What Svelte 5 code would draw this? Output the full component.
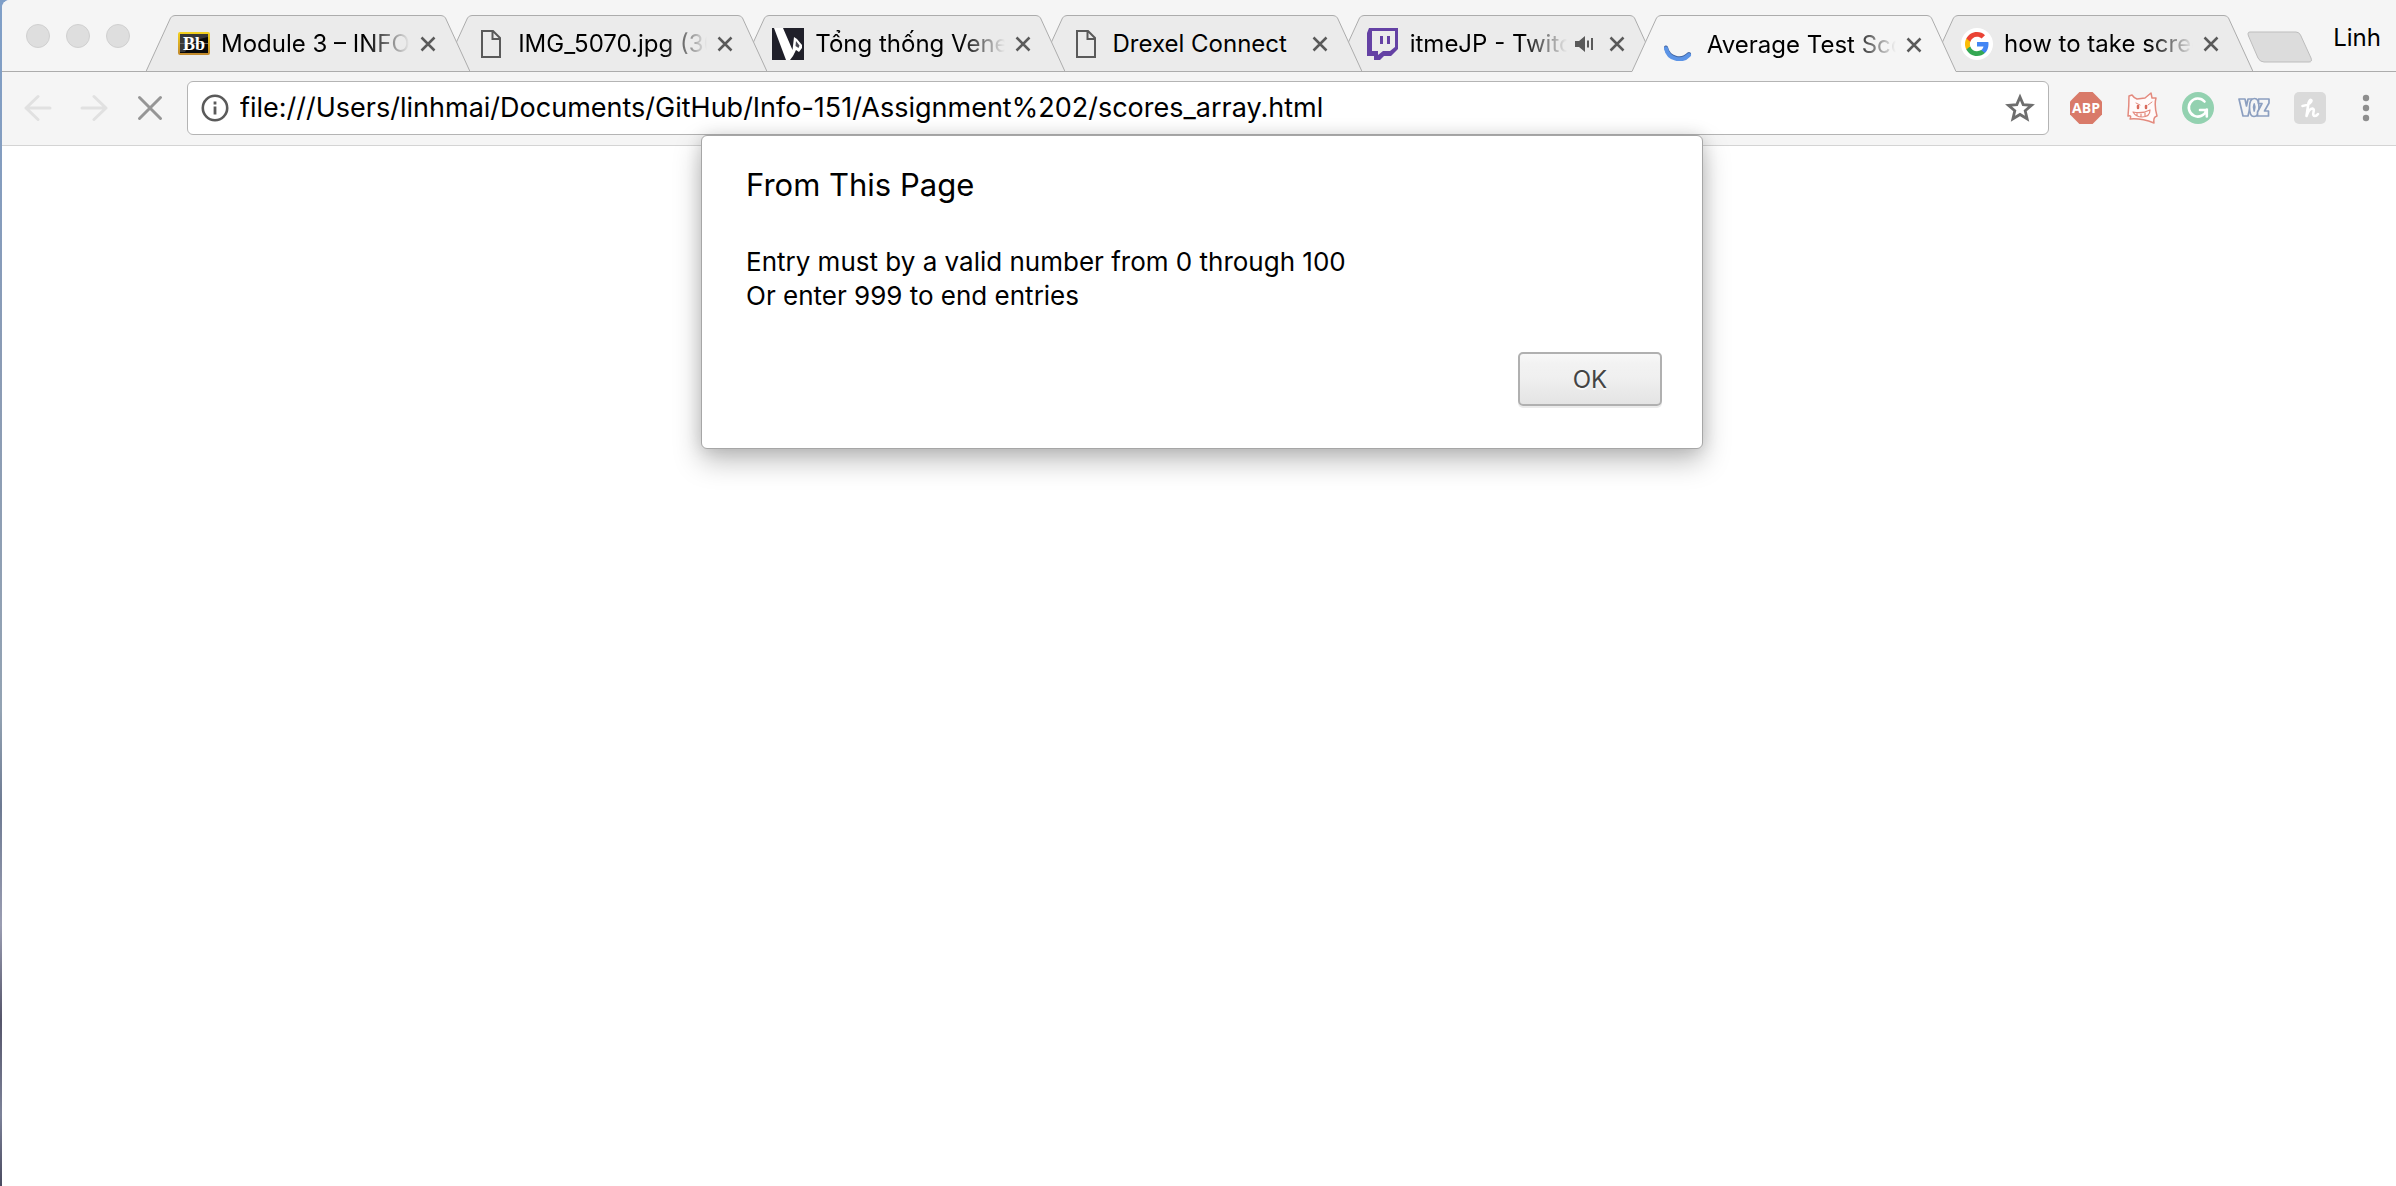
<script>
  const tabs = [
    { title: 'Module 3 – INFO', icon: 'bb', fade: true },
    { title: 'IMG_5070.jpg (30', icon: 'page', fade: true },
    { title: 'Tổng thống Vene', icon: 'news', fade: true },
    { title: 'Drexel Connect', icon: 'page' },
    { title: 'itmeJP - Twitc', icon: 'twitch', fade: true, audio: true },
    { title: 'Average Test Sco', icon: 'spinner', fade: true, active: true },
    { title: 'how to take scree', icon: 'google', fade: true }
  ];
  let url = $state('file:///Users/linhmai/Documents/GitHub/Info-151/Assignment%202/scores_array.html');
</script>

<div class="desktop">
  <div class="window">
    <header class="strip">
      <div class="lights">
        <button class="light" aria-label="Close window"></button>
        <button class="light" aria-label="Minimize window"></button>
        <button class="light" aria-label="Zoom window"></button>
      </div>

      <div class="tabs" role="tablist">
        {#each tabs as tab, i}
          <div class="tab" class:active={tab.active} style:z-index={tab.active ? 20 : 10 - i}>
            <svg class="edge" viewBox="0 0 30 57" preserveAspectRatio="xMidYMin slice" aria-hidden="true">
              <path class="fill" d="M0 57V56L24.500 3Q26 .5 29 .5H30V57Z" />
              <path class="line" d="M0 56.500L24.500 3Q26 .5 29 .5H30" />
            </svg>
            <div class="body" role="tab" aria-selected={!!tab.active} tabindex="0">
              <span class="fav" class:narrow={tab.icon === 'page'}>
                {#if tab.icon === 'bb'}
                  <svg width="32" height="24" viewBox="0 0 32 24" aria-hidden="true">
                    <defs>
                      <linearGradient id="gold" x1="0" y1="0" x2="0" y2="1">
                        <stop offset="0" stop-color="#f2cf1e" /><stop offset="1" stop-color="#c28a2c" />
                      </linearGradient>
                    </defs>
                    <rect x="1" y="1" width="30" height="21" rx="1" fill="#0a0a0a" stroke="url(#gold)" stroke-width="2" />
                    <path d="M2 2H30V5Q14 7 7 20H2Z" fill="#555" opacity=".6" />
                    <path d="M2 11.500H30" stroke="#666" />
                    <text x="16" y="18" text-anchor="middle" font-family="Liberation Serif, serif" font-weight="700" font-size="18" fill="#fff">Bb</text>
                  </svg>
                {:else if tab.icon === 'page'}
                  <svg width="20" height="28" viewBox="0 0 20 28" aria-hidden="true">
                    <path d="M1 1H12L19 8V27H1ZM11.500 1V9H19" fill="none" stroke="#5a5a5a" stroke-width="2" />
                  </svg>
                {:else if tab.icon === 'news'}
                  <svg width="32" height="32" viewBox="0 0 32 32" aria-hidden="true">
                    <rect width="32" height="32" fill="#20202a" />
                    <path d="M2 0H11L20.500 22L22 9L25 11L30 17V20L27 24L24 22L21 28L18 32H14Z" fill="#fff" />
                    <path d="M24 13L27.500 17.500L26.500 20L23.500 18Z" fill="#4a4a54" />
                  </svg>
                {:else if tab.icon === 'twitch'}
                  <svg width="32" height="32" viewBox="0 0 32 32" aria-hidden="true">
                    <path d="M2 0H31V21L24 28H17L13 32H7V28H0V5Z" fill="#6441a4" />
                    <path d="M5 3H28V19L23 23H16L11 27V23H5Z" fill="#ebebeb" />
                    <path d="M13 8H16V16H13ZM20 8H23V16H20Z" fill="#6441a4" />
                  </svg>
                {:else if tab.icon === 'spinner'}
                  <svg width="32" height="32" viewBox="0 0 32 32" aria-hidden="true">
                    <path d="M2 18.500A13.500 13.500 0 0 0 25 25" fill="none" stroke="#3f63a0" stroke-width="4" stroke-linecap="round" />
                    <path d="M2 19.500A13.500 13.500 0 0 0 25 26" fill="none" stroke="#5c94e6" stroke-width="4" stroke-linecap="round" />
                  </svg>
                {:else}
                  <svg width="32" height="32" viewBox="0 0 32 32" aria-hidden="true">
                    <circle cx="16" cy="16" r="16" fill="#fff" />
                    <g transform="translate(4 4)">
                      <path d="M23.500 12.300c0-.8-.1-1.600-.2-2.300H12v4.500h6.500c-.3 1.500-1.100 2.800-2.400 3.600v3h3.900c2.200-2.100 3.500-5.200 3.500-8.800z" fill="#4285f4" />
                      <path d="M12 24c3.200 0 6-1.100 7.900-2.900l-3.900-3c-1.100.7-2.400 1.200-4 1.200-3.100 0-5.800-2.100-6.700-4.900h-4v3.100C3.300 21.300 7.300 24 12 24z" fill="#34a853" />
                      <path d="M5.300 14.300c-.3-.7-.4-1.500-.4-2.300s.1-1.600.4-2.300V6.600h-4C.5 8.200 0 10.100 0 12s.5 3.800 1.300 5.400z" fill="#fbbc05" />
                      <path d="M12 4.800c1.800 0 3.300.6 4.600 1.800l3.400-3.400C18 1.200 15.200 0 12 0 7.300 0 3.300 2.700 1.300 6.600l4 3.100C6.200 6.900 8.900 4.800 12 4.800z" fill="#ea4335" />
                    </g>
                  </svg>
                {/if}
              </span>
              <span class="title" class:fade={tab.fade}>{tab.title}</span>
              {#if tab.audio}
                <button class="audio" aria-label="Mute tab">
                  <svg width="20" height="18" viewBox="0 0 20 18" aria-hidden="true">
                    <path d="M0 6H4L10 1V17L4 12H0Z" fill="#5a5a5a" />
                    <path d="M13 5.500V12.500M17 3V15" stroke="#5a5a5a" stroke-width="2" />
                  </svg>
                </button>
              {/if}
              <button class="close" aria-label="Close tab">
                <svg width="16" height="16" viewBox="0 0 16 16" aria-hidden="true">
                  <path d="M1.500 1.500L14.500 14.500M14.500 1.500L1.500 14.500" stroke="#5a5a5a" stroke-width="2.500" />
                </svg>
              </button>
            </div>
            <svg class="edge" viewBox="0 0 30 57" preserveAspectRatio="xMidYMin slice" aria-hidden="true">
              <path class="fill" d="M30 57V56L5.500 3Q4 .5 1 .5H0V57Z" />
              <path class="line" d="M30 56.500L5.500 3Q4 .5 1 .5H0" />
            </svg>
          </div>
        {/each}
      </div>

      <button class="new-tab" aria-label="New tab">
        <svg width="66" height="32" viewBox="0 0 66 32" aria-hidden="true">
          <path d="M3 1H49Q52 1 53.500 4L64 27Q65.500 31 62 31H17Q13 31 11 27L1.500 5Q0 1 3 1Z" fill="#dcdcdc" stroke="#bdbdbd" />
        </svg>
      </button>
      <button class="profile">Linh</button>
    </header>

    <nav class="toolbar">
      <div class="nav">
        <button aria-label="Back">
          <svg width="28" height="28" viewBox="0 0 28 28" aria-hidden="true">
            <path d="M26 14H2M14 2.500L2 14L14 25.500" fill="none" stroke="#e1e1e1" stroke-width="3" stroke-linecap="round" stroke-linejoin="round" />
          </svg>
        </button>
        <button aria-label="Forward">
          <svg width="28" height="28" viewBox="0 0 28 28" aria-hidden="true">
            <path d="M2 14H26M14 2.500L26 14L14 25.500" fill="none" stroke="#e1e1e1" stroke-width="3" stroke-linecap="round" stroke-linejoin="round" />
          </svg>
        </button>
        <button aria-label="Stop loading">
          <svg width="28" height="28" viewBox="0 0 28 28" aria-hidden="true">
            <path d="M3.500 3.500L24.500 24.500M24.500 3.500L3.500 24.500" stroke="#969696" stroke-width="3" stroke-linecap="round" />
          </svg>
        </button>
      </div>

      <div class="omnibox">
        <button aria-label="Page information">
          <svg width="28" height="28" viewBox="0 0 28 28" aria-hidden="true">
            <circle cx="14" cy="14" r="12.200" fill="none" stroke="#5a5a5a" stroke-width="2.600" />
            <path d="M12.600 7.500H15.400V10.500H12.600ZM12.600 12.500H15.400V20.500H12.600Z" fill="#5a5a5a" />
          </svg>
        </button>
        <input type="text" aria-label="Address" spellcheck="false" bind:value={url} />
        <button aria-label="Bookmark this page">
          <svg width="30" height="30" viewBox="0 0 30 30" aria-hidden="true">
            <path d="M15 4L18.200 11.600L26.500 12.300L20.200 17.700L22.100 25.800L15 21.500L7.900 25.800L9.800 17.700L3.500 12.300L11.800 11.600Z" fill="none" stroke="#6e6e6e" stroke-width="2.800" />
          </svg>
        </button>
      </div>

      <div class="extensions">
        <button aria-label="Adblock Plus">
          <svg width="32" height="32" viewBox="0 0 32 32" aria-hidden="true">
            <path d="M9.400 0H22.600L32 9.400V22.600L22.600 32H9.400L0 22.600V9.400Z" fill="#d97a69" />
            <text x="16" y="21" text-anchor="middle" font-family="Open Sans, sans-serif" font-weight="700" font-size="14" fill="#fff">ABP</text>
          </svg>
        </button>
        <button aria-label="Smiling cat">
          <svg width="32" height="32" viewBox="0 0 32 32" aria-hidden="true" fill="none" stroke="#e38a7e" stroke-linejoin="round" stroke-linecap="round">
            <path d="M3 4L6 3Q8 6 11 7L19 6L25 1L26 6L30 6Q28 13 31 24Q27 25 28 31Q15 26 4 27Q6 23 2 24Q3 14 3 4Z" fill="#fffafa" stroke-width="1.500" />
            <path d="M10 11L14 13M22 13L26 10" stroke-width="1" />
            <path d="M12 14V16M20 14V16" stroke="#d9695b" stroke-width="2.500" />
            <path d="M7 20Q16 22 24 18Q24 25 16 25Q10 25 7 20ZM11 21V24M15 22V25M19 21V24" stroke-width="1.200" />
          </svg>
        </button>
        <button aria-label="Grammarly">
          <svg width="32" height="32" viewBox="0 0 32 32" aria-hidden="true">
            <circle cx="16" cy="16" r="16" fill="#93d1b0" />
            <path d="M22.500 9.500A9 9 0 1 0 24.500 18H18M24.800 17.500V24.500" fill="none" stroke="#fff" stroke-width="2.600" stroke-linecap="round" />
          </svg>
        </button>
        <button aria-label="Voz">
          <svg width="32" height="32" viewBox="0 0 32 32" aria-hidden="true" fill="#f5f5f5" stroke="#8c9fc0" stroke-width="1.700" stroke-linejoin="round">
            <path d="M1 7H7L8.500 14L10 7H14L10 24H5Z" />
            <path d="M16.500 6.500Q21 6.500 21 15.500Q21 24.500 16 24.500Q11.500 24.500 11.500 15.500Q11.500 6.500 16.500 6.500ZM16.200 12Q14.800 15 16.200 19Q17.600 15 16.200 12Z" />
            <path d="M20.500 7H31V11L26.500 19H30.500V24H19.500V20L24 11.500H20.500Z" />
          </svg>
        </button>
        <button aria-label="Honey">
          <svg width="32" height="32" viewBox="0 0 32 32" aria-hidden="true">
            <rect width="32" height="32" rx="5" fill="#dadada" />
            <path d="M8.500 14Q18 12 17.500 8.500Q16 6.500 14.500 11L12.500 24Q15 16.500 18.500 16.500Q20.500 17 19.500 20Q18.500 24 21 24Q22.500 24 24 22" fill="none" stroke="#fff" stroke-width="2.600" stroke-linecap="round" stroke-linejoin="round" />
          </svg>
        </button>
        <button class="menu" aria-label="Browser menu">
          <svg width="8" height="28" viewBox="0 0 8 28" aria-hidden="true" fill="#8e8e8e">
            <circle cx="4" cy="4" r="3.200" /><circle cx="4" cy="14" r="3.200" /><circle cx="4" cy="24" r="3.200" />
          </svg>
        </button>
      </div>
    </nav>

    <main class="page"></main>
  </div>

  <div class="overlay">
    <div class="dialog" role="alertdialog" aria-labelledby="dialog-title" aria-describedby="dialog-text">
      <h1 id="dialog-title">From This Page</h1>
      <p id="dialog-text">Entry must by a valid number from 0 through 100<br />Or enter 999 to end entries</p>
      <div class="actions"><button class="ok">OK</button></div>
    </div>
  </div>
</div>

<style>
  :global(body) { background: #fff; }
  .desktop {
    position: relative;
    box-sizing: border-box;
    min-height: 100vh;
    padding-left: 2px;
    display: flex;
    background: linear-gradient(#7f9fc8, #8a9bb5 30%, #93a3b3 60%, #6d7a92 68%, #9a9db2 78%, #55556a 86%, #7c8299 94%, #4a4a60);
    font-family: Inter, "Liberation Sans", sans-serif;
    color: #000;
  }
  button {
    display: flex;
    align-items: center;
    justify-content: center;
    padding: 0;
    border: 0;
    background: none;
    font: inherit;
    color: inherit;
    flex: none;
  }
  svg { display: block; flex: none; }
  .window {
    flex: 1;
    min-width: 0;
    display: flex;
    flex-direction: column;
    background: #fff;
    border-top-left-radius: 8px;
    overflow: hidden;
  }
  .strip {
    display: flex;
    align-items: flex-end;
    height: 71px;
    padding: 0 15px 0 24px;
    background: #f5f5f5;
    border-bottom: 1px solid #acacac;
  }
  .lights { display: flex; gap: 16px; margin: 0 16px 23px 0; }
  .light {
    box-sizing: border-box;
    width: 24px;
    height: 24px;
    border: 1px solid #d0d0d0;
    border-radius: 50%;
    background: #dedede;
  }
  .tabs { flex: 1; min-width: 0; display: flex; }
  .tab {
    position: relative;
    flex: 1 1 0;
    min-width: 0;
    display: flex;
    height: 56px;
  }
  .tab + .tab { margin-left: -27px; }
  .tab.active { height: 57px; margin-bottom: -1px; }
  .edge { width: 30px; height: 100%; overflow: hidden; }
  .fill { fill: #ebebeb; }
  .active .fill { fill: #f5f5f5; }
  .line { fill: none; stroke: #acacac; }
  .body {
    flex: 1;
    min-width: 0;
    display: flex;
    align-items: center;
    box-sizing: border-box;
    border-top: 1px solid #acacac;
    background: #ebebeb;
    padding: 1px 4px 0 2px;
  }
  .active .body { background: #f5f5f5; }
  .fav { display: flex; width: 32px; margin-right: 11px; flex: none; }
  .fav.narrow { justify-content: center; }
  .title {
    flex: 1;
    min-width: 0;
    overflow: hidden;
    white-space: nowrap;
    font-size: 24px;
    line-height: 32px;
  }
  .title.fade { mask-image: linear-gradient(to left, transparent, #000 44px); }
  .audio { margin-left: 8px; }
  .close { margin-left: 10px; }
  .audio + .close { margin-left: 14px; }
  .new-tab { margin: 0 20px 8px -6px; }
  .profile { margin-bottom: 17px; font-size: 24px; line-height: 32px; }
  .toolbar {
    display: flex;
    align-items: center;
    box-sizing: border-box;
    height: 74px;
    padding: 0 26px 2px 22px;
    background: #f5f5f5;
    border-bottom: 1px solid #d4d4d4;
  }
  .nav { display: flex; gap: 28px; }
  .omnibox {
    flex: 1;
    min-width: 0;
    display: flex;
    align-items: center;
    gap: 11px;
    box-sizing: border-box;
    height: 54px;
    margin: 0 21px 0 23px;
    padding: 0 13px;
    border: 1px solid #b4b4b4;
    border-radius: 6px;
    background: #fff;
  }
  input {
    flex: 1;
    min-width: 0;
    padding: 0;
    border: 0;
    outline: 0;
    background: none;
    color: #000;
    font: 27px/40px Inter, "Liberation Sans", sans-serif;
  }
  .extensions { display: flex; align-items: center; gap: 24px; }
  .menu { margin-left: 12px; }
  .page { flex: 1; background: #fff; }
  .overlay {
    position: absolute;
    z-index: 30;
    top: 135px;
    left: 8px;
    right: 0;
    display: flex;
    justify-content: center;
  }
  .dialog {
    box-sizing: border-box;
    width: 1002px;
    max-width: 100%;
    padding: 29px 40px 42px 44px;
    border: 1px solid #a6a6a6;
    border-radius: 6px;
    background: #fff;
    box-shadow: 0 12px 28px rgba(0, 0, 0, 0.26), 0 0 16px rgba(0, 0, 0, 0.12);
  }
  h1 { margin: 0; font-weight: 400; font-size: 31px; line-height: 40px; }
  p { margin: 40px 0 0; font-size: 26px; line-height: 34px; }
  .actions { display: flex; justify-content: flex-end; margin-top: 39px; }
  .ok {
    box-sizing: border-box;
    width: 144px;
    height: 54px;
    border: 2px solid #b0b0b0;
    border-radius: 5px;
    background: linear-gradient(#f8f8f8, #f2f2f2 20%, #f0f0f0 45%, #e4e4e4);
    box-shadow: 0 2px 0 #ebebeb;
    color: #444;
    font-size: 24px;
    text-shadow: 0 2px 0 #f8f8f8;
  }
</style>
